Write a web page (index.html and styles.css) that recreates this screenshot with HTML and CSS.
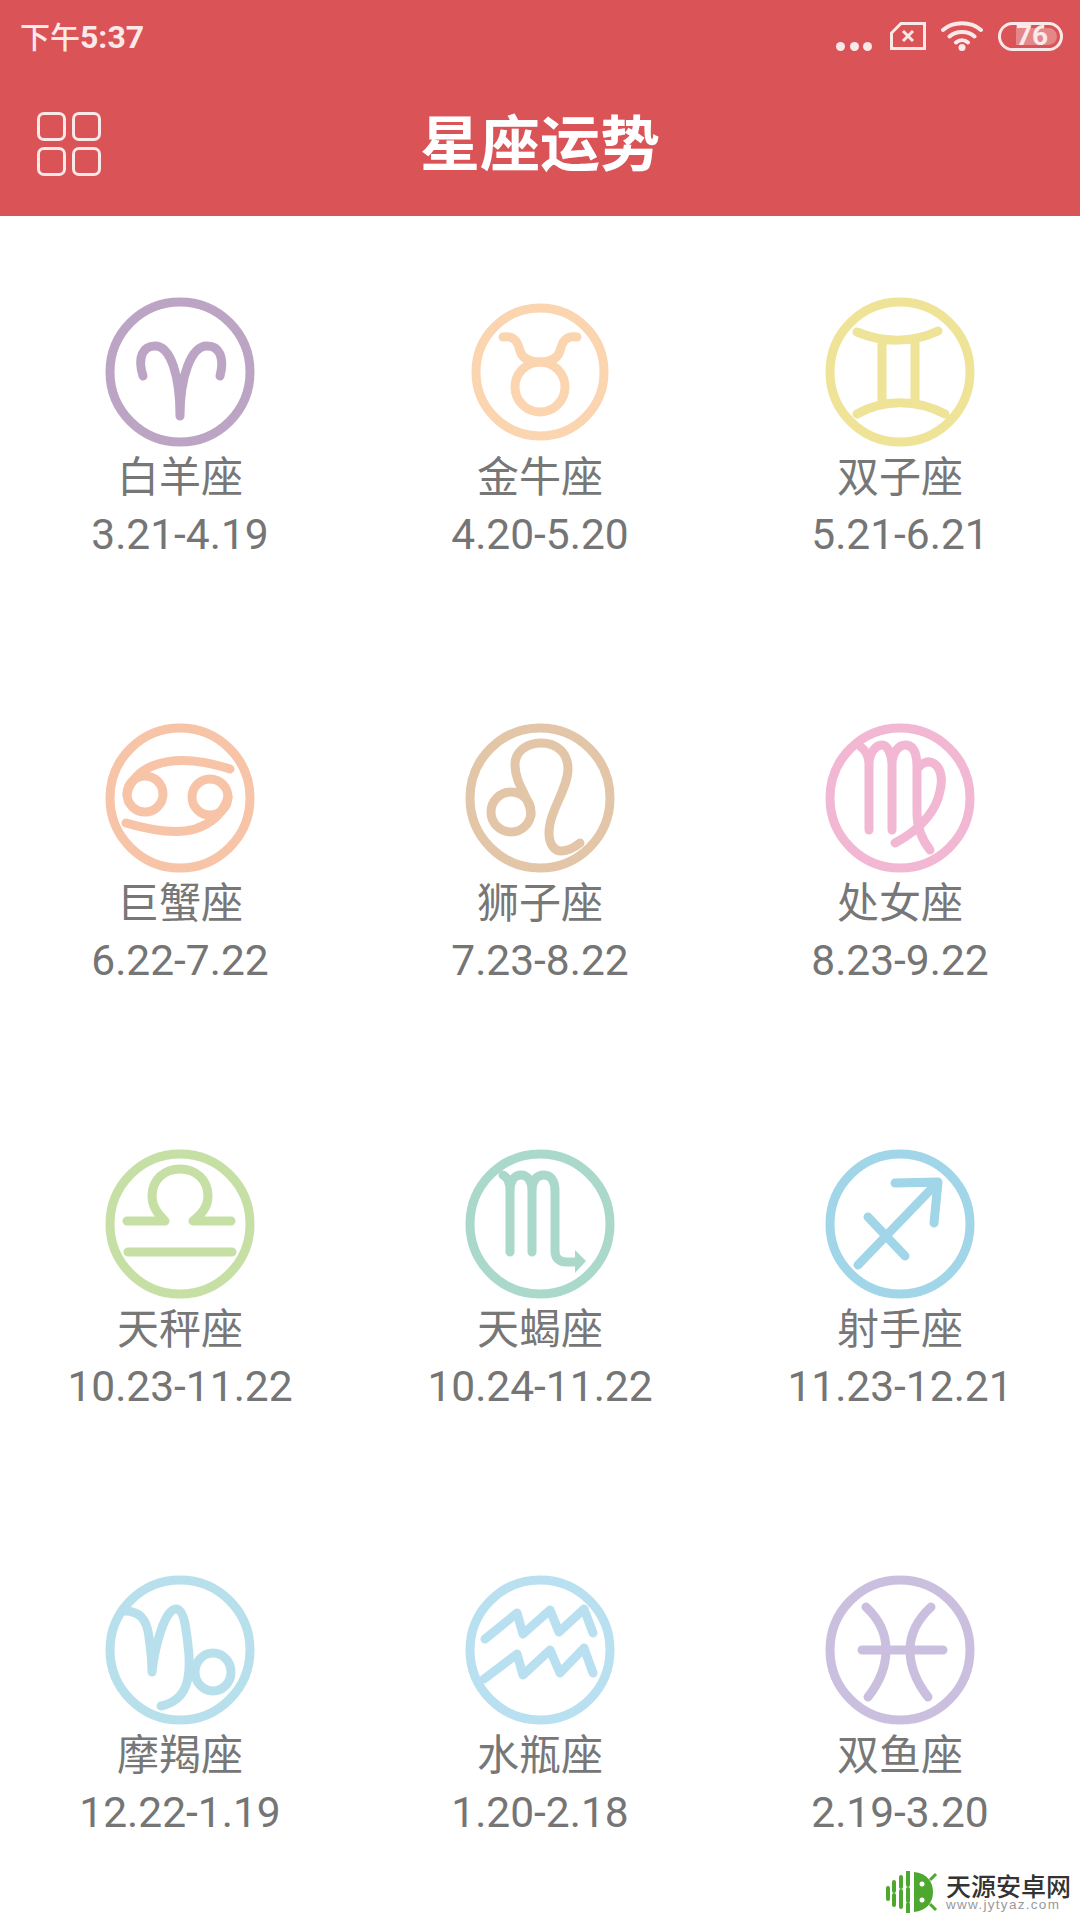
FILE: index.html
```html
<!DOCTYPE html><html lang="zh-CN">
<head>
  <meta charset="UTF-8">
  <meta name="viewport" content="width=device-width, initial-scale=1.0">
  <title>星座运势</title>
  <link rel="stylesheet" href="styles.css">
</head>
<body>
  <header class="top">
    <div class="status">
      <span class="time"><span class="time-cn">下午</span>5:37</span>
      <div class="status-icons">
        <span class="dots"><i></i><i></i><i></i></span>
        <svg class="sim" width="36" height="28" viewBox="0 0 36 28"><path d="M11 1.5H34.5V26.5H1.5V11Z"/><path d="M13 9L23 19M23 9L13 19"/></svg>
        <svg class="wifi" width="42" height="30" viewBox="0 0 42 30"><path d="M2 9C12 0 30 0 40 9M8.5 15.5C15 9.5 27 9.5 33.5 15.5M15 21.5C18.5 18.5 23.5 18.5 27 21.5"/><circle cx="21" cy="26.5" r="3.5"/></svg>
        <div class="battery"><span class="battery-fill"></span><span class="battery-num">76</span></div>
      </div>
    </div>
    <div class="toolbar">
      <div class="menu-btn"><i></i><i></i><i></i><i></i></div>
      <h1 class="title">星座运势</h1>
    </div>
  </header>

  <main class="signs">
    <div class="sign aries">
      <svg class="glyph" viewBox="0 0 150 150"><circle class="ring" cx="75" cy="75" r="70"/><path d="M38 79C32 60 38 49 50 49C66 49 75 80 75 119C75 80 86 49 102 49C114 49 120 60 115 79"/></svg>
      <div class="name">白羊座</div><div class="dates">3.21-4.19</div>
    </div>
    <div class="sign taurus">
      <svg class="glyph" viewBox="0 0 150 150"><circle class="ring" cx="75" cy="75" r="64"/><circle cx="75" cy="90" r="25"/><path d="M38 40C50 38 53 46 55 54C58 63 66 65 75 65C84 65 92 63 95 54C97 46 100 38 112 40"/></svg>
      <div class="name">金牛座</div><div class="dates">4.20-5.20</div>
    </div>
    <div class="sign gemini">
      <svg class="glyph" viewBox="0 0 150 150"><circle class="ring" cx="75" cy="75" r="70"/><path d="M32 35C58 46 88 46 113 34M32 117C58 102 92 102 120 117M57 42V106M90 42V106"/></svg>
      <div class="name">双子座</div><div class="dates">5.21-6.21</div>
    </div>

    <div class="sign cancer">
      <svg class="glyph" viewBox="0 0 150 150"><circle class="ring" cx="75" cy="75" r="70"/><circle cx="40" cy="71" r="18"/><circle cx="105" cy="74" r="18"/><path d="M125 46C100 38 72 34 50 42C35 47 25 58 22 71M21 100C45 107 70 112 90 106C105 101 118 92 123 74"/></svg>
      <div class="name">巨蟹座</div><div class="dates">6.22-7.22</div>
    </div>
    <div class="sign leo">
      <svg class="glyph" viewBox="0 0 150 150"><circle class="ring" cx="75" cy="75" r="70"/><circle cx="46" cy="89" r="20"/><path d="M66 92C66 76 50 62 50 42C50 28 62 20 76 20C92 20 103 30 103 46C103 66 84 88 84 110C84 122 90 128 96 128C102 128 110 124 115 120"/></svg>
      <div class="name">狮子座</div><div class="dates">7.23-8.22</div>
    </div>
    <div class="sign virgo">
      <svg class="glyph" viewBox="0 0 150 150"><circle class="ring" cx="75" cy="75" r="70"/><path d="M36 24C40 27 44 32 44 42V107M44 42C44 28 52 22 57 22C62 22 67 30 67 42V107M67 42C67 28 75 22 80 22C88 22 92 30 92 44V90C92 105 98 118 105 127M92 46C98 38 104 38 108 40C116 44 118 56 115 68C112 84 100 104 70 120"/></svg>
      <div class="name">处女座</div><div class="dates">8.23-9.22</div>
    </div>

    <div class="sign libra">
      <svg class="glyph" viewBox="0 0 150 150"><circle class="ring" cx="75" cy="75" r="70"/><path d="M22 72H60C52 64 47 57 47 47C47 31 59 20 75 20C91 20 103 31 103 47C103 57 98 64 88 72H126M23 103H127"/></svg>
      <div class="name">天秤座</div><div class="dates">10.23-11.22</div>
    </div>
    <div class="sign scorpio">
      <svg class="glyph" viewBox="0 0 150 150"><circle class="ring" cx="75" cy="75" r="70"/><path d="M38 26C42 28 45 33 45 42V103M45 42C45 31 50 26 56 26C62 26 67 31 67 42V103M67 42C67 31 72 26 79 26C86 26 90 32 90 42V102C90 109 94 113 101 113H112"/><path class="head" d="M110 101L121 112L110 124Z"/></svg>
      <div class="name">天蝎座</div><div class="dates">10.24-11.22</div>
    </div>
    <div class="sign sagittarius">
      <svg class="glyph" viewBox="0 0 150 150"><circle class="ring" cx="75" cy="75" r="70"/><path d="M33 116L113 33M70 34L113 33L109 74M43 68L80 107"/></svg>
      <div class="name">射手座</div><div class="dates">11.23-12.21</div>
    </div>

    <div class="sign capricorn">
      <svg class="glyph" viewBox="0 0 150 150"><circle class="ring" cx="75" cy="75" r="70"/><ellipse cx="108" cy="97" rx="18" ry="19"/><path d="M20 36C34 36 42 44 44 62C46 76 47 88 47 97C50 70 60 34 71 34C80 34 82 60 84 80C85 100 84 125 56 131"/></svg>
      <div class="name">摩羯座</div><div class="dates">12.22-1.19</div>
    </div>
    <div class="sign aquarius">
      <svg class="glyph" viewBox="0 0 150 150"><circle class="ring" cx="75" cy="75" r="70"/><path d="M20 64L52 38L58 59L85 35L94 57L119 34L128 58M19 104L52 79L58 100L85 75L95 98L119 73L128 98"/></svg>
      <div class="name">水瓶座</div><div class="dates">1.20-2.18</div>
    </div>
    <div class="sign pisces">
      <svg class="glyph" viewBox="0 0 150 150"><circle class="ring" cx="75" cy="75" r="70"/><path d="M37 75H118M41 32C54 44 61 58 61 75C61 92 54 108 43 122M106 32C93 44 85 58 85 75C85 92 92 108 103 122"/></svg>
      <div class="name">双鱼座</div><div class="dates">2.19-3.20</div>
    </div>
  </main>

  <div class="watermark">
    <svg class="wm-logo" width="52" height="42" viewBox="0 0 52 42">
      <path class="wm-bars" d="M2 17V28M8 11V20M8 24V34M15 6V16M15 20V36M22 1V14M22 18V30M22 33V41"/>
      <path class="wm-head" d="M28 1C41 2 47 11 47 21C47 31 41 40 28 41Z"/>
      <circle class="wm-eye" cx="36" cy="13" r="2.5"/><circle class="wm-eye" cx="36" cy="29" r="2.5"/>
      <path class="wm-ant" d="M44 9L50 3M44 33L50 39"/>
    </svg>
    <div class="wm-text">
      <div class="wm-name">天源安卓网</div>
      <div class="wm-url">www.jytyaz.com</div>
    </div>
  </div>
</body>
</html>
```

FILE: styles.css
```css
* { box-sizing: border-box; }
body { margin: 0; width: 1080px; height: 1920px; overflow: hidden; position: relative; background: #fff; font-family: Roboto, "Noto Sans CJK SC", sans-serif; }

.top { height: 216px; background: #d95357; color: #fff; display: flex; flex-direction: column; }
.status { height: 72px; padding: 0 17px 0 20px; display: flex; justify-content: space-between; align-items: center; }
.time { font-size: 32px; font-weight: 700; color: #fbe9e9; margin-top: -3px; }
.time-cn { font-family: "Noto Sans CJK SC", sans-serif; font-size: 30px; font-weight: 500; }
.status-icons { display: flex; align-items: center; }
.dots { display: flex; gap: 4.5px; margin-top: 20px; margin-right: 18px; }
.dots i { width: 9px; height: 9px; border-radius: 50%; background: #fbe9e9; }
.sim { margin-right: 15px; }
.sim path { fill: none; stroke: #fbe9e9; stroke-width: 3; }
.wifi { margin-right: 15px; }
.wifi path { fill: none; stroke: #fbe9e9; stroke-width: 4; stroke-linecap: round; }
.wifi circle { fill: #fbe9e9; }
.battery { width: 65px; height: 29px; border: 3.5px solid #fbe9e9; border-radius: 15px; position: relative; display: flex; align-items: center; }
.battery-fill { position: absolute; left: 15px; top: 3px; bottom: 3px; right: 3px; background: rgba(255,255,255,.3); border-radius: 0 9px 9px 0; }
.battery-num { position: absolute; left: 15px; top: -6px; font-size: 28px; line-height: 34px; font-weight: 700; color: #fbe9e9; }

.toolbar { flex: 1; position: relative; display: flex; align-items: center; justify-content: center; padding-bottom: 8px; }
.title { margin: 0; font-family: "Noto Sans CJK SC", sans-serif; font-size: 60px; font-weight: 700; line-height: 1; }
.menu-btn { position: absolute; left: 37px; top: 40px; display: grid; grid-template-columns: 29px 29px; grid-auto-rows: 29px; gap: 6px; }
.menu-btn i { border: 3px solid #fbe9e9; border-radius: 7px; }

.signs { padding-top: 81px; display: grid; grid-template-columns: repeat(3, 360px); grid-auto-rows: 426px; }
.sign { display: flex; flex-direction: column; align-items: center; }
.glyph { width: 150px; height: 150px; display: block; fill: none; stroke: currentColor; stroke-width: 9; stroke-linecap: round; stroke-linejoin: round; }
.glyph .head { fill: currentColor; stroke: none; }
.name { margin-top: 2px; font-family: "Noto Sans CJK SC", sans-serif; font-size: 42px; line-height: 50px; color: #777; }
.dates { margin-top: 11px; font-size: 42.5px; line-height: 50px; color: #757575; }

.aries { color: #bca5c4; }
.taurus { color: #fbd5b0; }
.gemini { color: #eee397; }
.cancer { color: #f7c4a7; }
.leo { color: #e3c5a8; }
.virgo { color: #f2b7d2; }
.libra { color: #c6dfa5; }
.scorpio { color: #aad9cb; }
.sagittarius { color: #a1d5e8; }
.capricorn { color: #b8e0ec; }
.aquarius { color: #b8e0f0; }
.pisces { color: #cbbfdf; }

.watermark { position: absolute; right: 9px; bottom: 7px; display: flex; align-items: center; gap: 8px; }
.wm-bars { fill: none; stroke: #4ea72e; stroke-width: 4; stroke-linecap: round; }
.wm-head { fill: #4ea72e; }
.wm-eye { fill: #fff; }
.wm-ant { fill: none; stroke: #4ea72e; stroke-width: 3; }
.wm-name { font-family: "Noto Sans CJK SC", sans-serif; font-size: 25px; line-height: 26px; font-weight: 500; color: #333; }
.wm-url { font-family: "Liberation Sans", sans-serif; font-size: 13.5px; line-height: 14px; letter-spacing: 1.3px; color: #999; }
```
